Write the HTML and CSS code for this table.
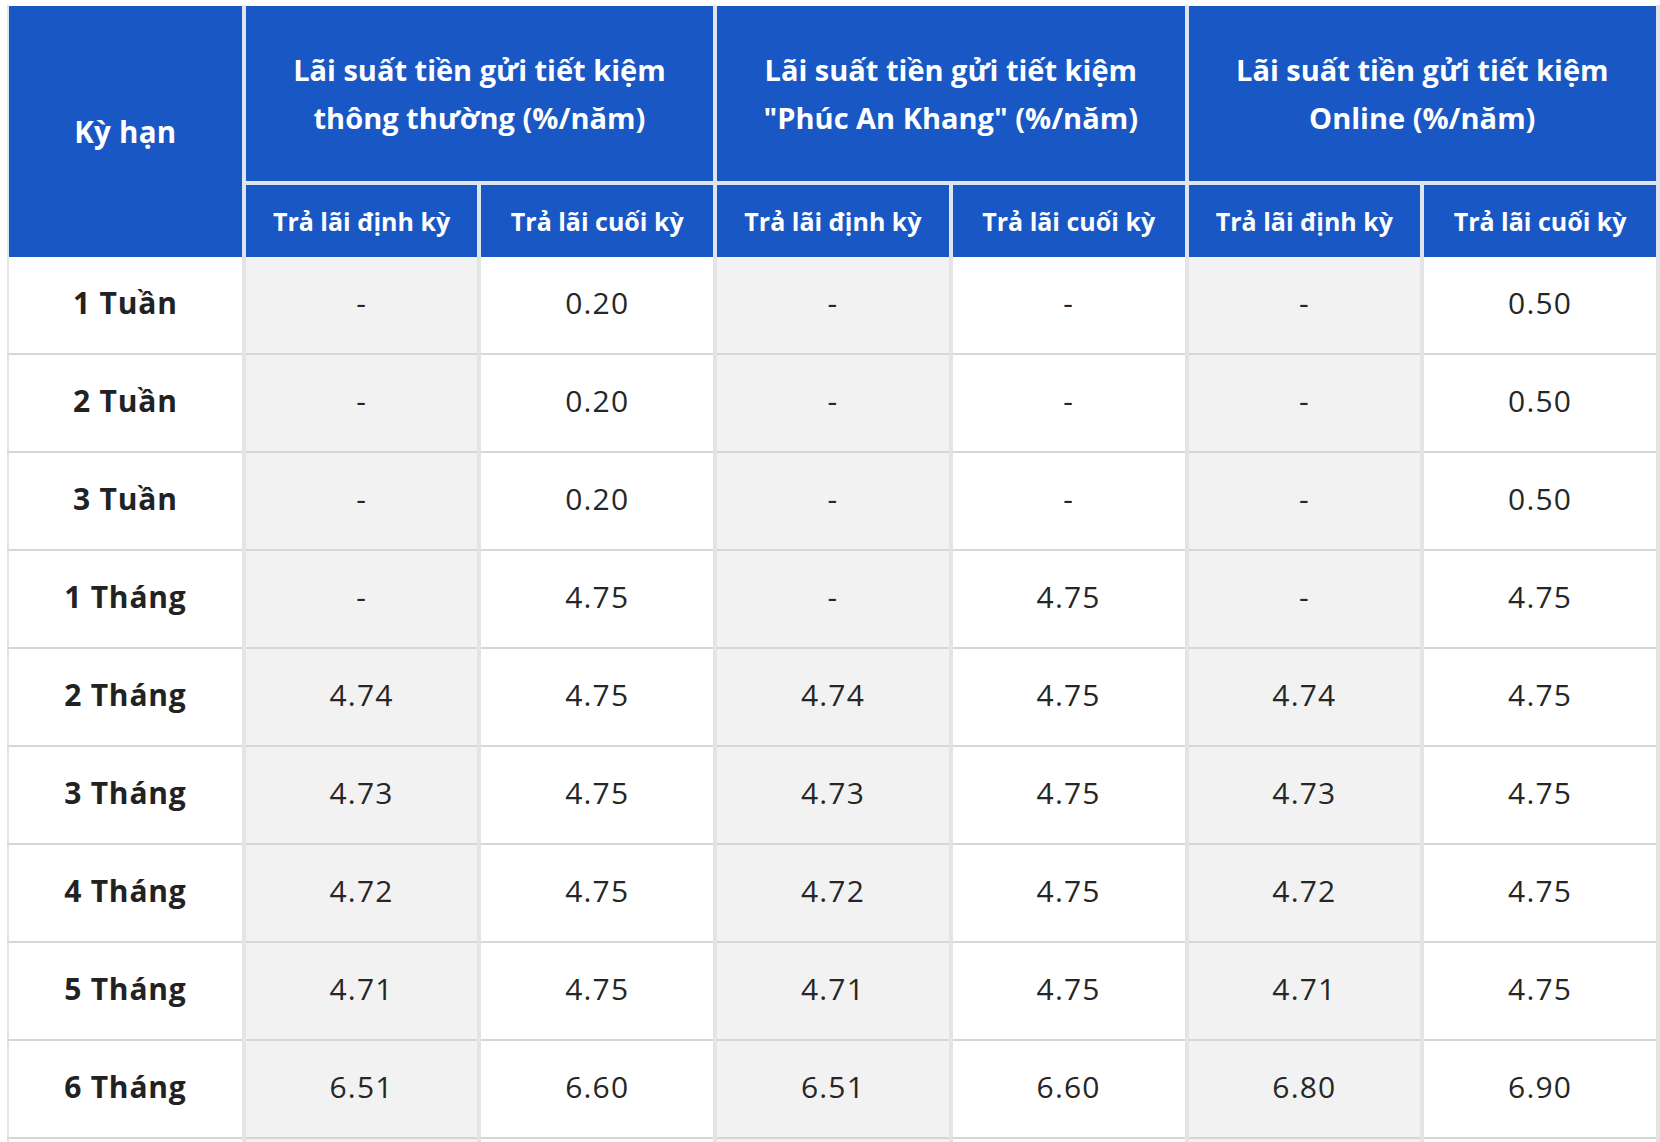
FILE: index.html
```html
<!DOCTYPE html>
<html lang="vi">
<head>
<meta charset="utf-8">
<title>Lãi suất tiền gửi tiết kiệm</title>
<link rel="stylesheet" href="styles.css">
</head>
<body>
<div class="viewport">
<table class="rates">
  <colgroup>
    <col><col><col><col><col><col><col>
  </colgroup>
  <thead>
    <tr class="head-top">
      <th rowspan="2" class="term-head">Kỳ hạn</th>
      <th colspan="2" class="group">Lãi suất tiền gửi tiết kiệm<br>thông thường (%/năm)</th>
      <th colspan="2" class="group">Lãi suất tiền gửi tiết kiệm<br>"Phúc An Khang" (%/năm)</th>
      <th colspan="2" class="group">Lãi suất tiền gửi tiết kiệm<br>Online (%/năm)</th>
    </tr>
    <tr class="head-sub">
      <th class="sub">Trả lãi định kỳ</th>
      <th class="sub">Trả lãi cuối kỳ</th>
      <th class="sub">Trả lãi định kỳ</th>
      <th class="sub">Trả lãi cuối kỳ</th>
      <th class="sub">Trả lãi định kỳ</th>
      <th class="sub">Trả lãi cuối kỳ</th>
    </tr>
  </thead>
  <tbody>
    <tr><td class="term">1 Tuần</td><td class="shade">-</td><td>0.20</td><td class="shade">-</td><td>-</td><td class="shade">-</td><td>0.50</td></tr>
    <tr><td class="term">2 Tuần</td><td class="shade">-</td><td>0.20</td><td class="shade">-</td><td>-</td><td class="shade">-</td><td>0.50</td></tr>
    <tr><td class="term">3 Tuần</td><td class="shade">-</td><td>0.20</td><td class="shade">-</td><td>-</td><td class="shade">-</td><td>0.50</td></tr>
    <tr><td class="term">1 Tháng</td><td class="shade">-</td><td>4.75</td><td class="shade">-</td><td>4.75</td><td class="shade">-</td><td>4.75</td></tr>
    <tr><td class="term">2 Tháng</td><td class="shade">4.74</td><td>4.75</td><td class="shade">4.74</td><td>4.75</td><td class="shade">4.74</td><td>4.75</td></tr>
    <tr><td class="term">3 Tháng</td><td class="shade">4.73</td><td>4.75</td><td class="shade">4.73</td><td>4.75</td><td class="shade">4.73</td><td>4.75</td></tr>
    <tr><td class="term">4 Tháng</td><td class="shade">4.72</td><td>4.75</td><td class="shade">4.72</td><td>4.75</td><td class="shade">4.72</td><td>4.75</td></tr>
    <tr><td class="term">5 Tháng</td><td class="shade">4.71</td><td>4.75</td><td class="shade">4.71</td><td>4.75</td><td class="shade">4.71</td><td>4.75</td></tr>
    <tr><td class="term">6 Tháng</td><td class="shade">6.51</td><td>6.60</td><td class="shade">6.51</td><td>6.60</td><td class="shade">6.80</td><td>6.90</td></tr>
    <tr><td class="term"></td><td class="shade"></td><td></td><td class="shade"></td><td></td><td class="shade"></td><td></td></tr>
  </tbody>
</table>
</div>
</body>
</html>
```

FILE: styles.css
```css
html, body {
  margin: 0;
  padding: 0;
  background: #ffffff;
}

.viewport {
  height: 1142px;
  overflow: hidden;
  padding: 5px 0 0 7px;
  box-sizing: border-box;
}

.rates {
  border-collapse: collapse;
  table-layout: fixed;
  width: 1653px;
  font-family: "Open Sans", "Noto Sans", sans-serif;
  color: #262626;
  border-left: 2px solid #dadada;
  border-right: 4px solid #dadada;
}

.rates th {
  background: #1857c4;
  color: #ffffff;
  font-weight: 700;
  text-align: center;
  vertical-align: middle;
  padding: 0;
  border: 4px solid #dfe5ee;
}

.head-top th {
  border-top: 1px solid #ffffff;
  height: 175px;
}

.head-top .group {
  font-size: 29px;
  line-height: 48px;
  border-bottom: 3px solid #ffffff;
}

.head-top .term-head {
  border-bottom: none;
}

.head-sub th {
  height: 72px;
  font-size: 25px;
  border-bottom: none;
}

.term-head {
  font-size: 29.5px;
  letter-spacing: 0.3px;
}

.rates td {
  height: 92px;
  padding: 0 0 4px;
  text-align: center;
  vertical-align: middle;
  font-size: 30px;
  line-height: 40px;
  letter-spacing: 1.2px;
  border-left: 4px solid #e4e4e4;
  border-right: 4px solid #e4e4e4;
  border-top: 2px solid #d6d6d6;
  border-bottom: 2px solid #d6d6d6;
}

.rates tbody tr:first-child td {
  border-top: none;
}

.rates th:first-child,
.rates td:first-child {
  border-left-width: 2px;
}

.head-sub th:first-child {
  border-left-width: 4px;
}

.rates td.term {
  font-weight: 700;
  font-size: 30px;
  letter-spacing: 0.8px;
  color: #222222;
}

.rates td.shade {
  background: #f2f2f2;
}
```
